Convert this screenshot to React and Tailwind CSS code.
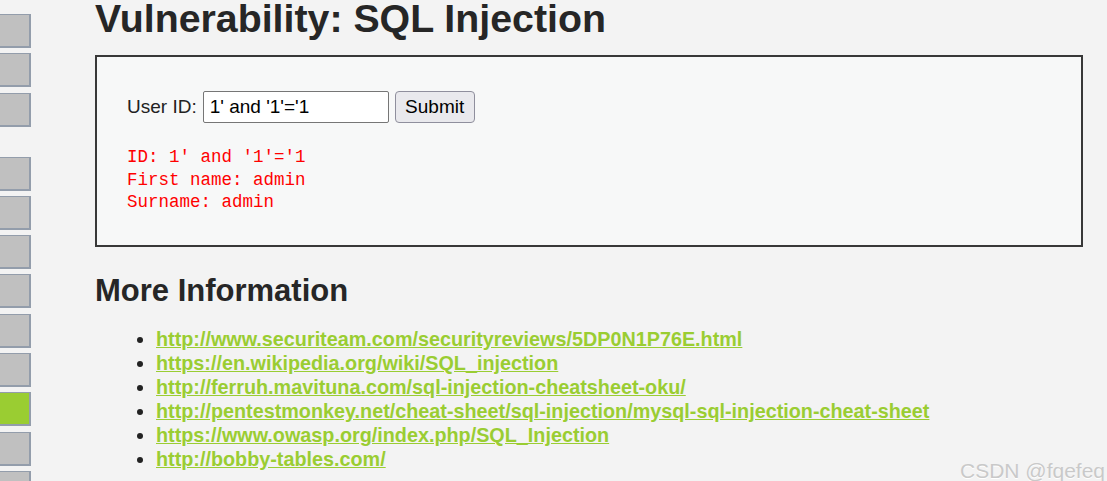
import React from "react";

const links = [
    "http://www.securiteam.com/securityreviews/5DP0N1P76E.html",
    "https://en.wikipedia.org/wiki/SQL_injection",
    "http://ferruh.mavituna.com/sql-injection-cheatsheet-oku/",
    "http://pentestmonkey.net/cheat-sheet/sql-injection/mysql-sql-injection-cheat-sheet",
    "https://www.owasp.org/index.php/SQL_Injection",
    "http://bobby-tables.com/",
];

function MenuBlock({ active }) {
    return (
        <div
            className={`h-[34px] w-[31px] border-t border-r-2 border-b-2 border-[#939dab] ${
                active ? "bg-[#9acd32]" : "bg-[#c0c0c0]"
            }`}
        />
    );
}

function App() {
    const top = [0, 1, 2];
    const bottom = [3, 4, 5, 6, 7, 8, 9, 10, 11];

    return (
        <div className="relative h-[481px] w-[1107px] overflow-hidden bg-[#f3f3f3] font-['Liberation_Sans',Arial,sans-serif] text-[#222]">
            <div className="flex">
                {/* left menu */}
                <div className="flex w-[31px] shrink-0 flex-col pt-[14px]">
                    <div className="flex flex-col gap-[5.3px]">
                        {top.map((i) => (
                            <MenuBlock key={i} />
                        ))}
                    </div>
                    <div className="mt-[30px] flex flex-col gap-[5.3px]">
                        {bottom.map((i) => (
                            <MenuBlock key={i} active={i === 9} />
                        ))}
                    </div>
                </div>

                {/* body */}
                <div className="ml-[64px] w-[988px]">
                    <h1 className="text-[39.3px] font-bold leading-[36px] text-[#262626]">Vulnerability: SQL Injection</h1>

                    <div className="mt-[19px] box-border h-[192px] border-2 border-[#383838] bg-[#f7f8f8] pl-[30px] pt-[34px]">
                        <form className="flex items-center text-[19px]" onSubmit={(e) => e.preventDefault()}>
                            <label className="mr-[6px] text-[#222]">User ID:</label>
                            <input
                                type="text"
                                defaultValue="1' and '1'='1"
                                className="box-border h-[32px] w-[186px] rounded-[2px] border border-[#767676] bg-white px-[6px] text-[19px] text-black outline-none"
                            />
                            <button
                                type="submit"
                                className="ml-[6px] box-border h-[32px] w-[80px] rounded-[4px] border border-[#8f8f9d] bg-[#e9e9ed] text-[19px] text-black"
                            >
                                Submit
                            </button>
                        </form>
                        <pre className="mt-[23px] font-['Liberation_Mono',monospace] text-[17.5px] leading-[22.5px] text-[#ff0000]">
                            {"ID: 1' and '1'='1\nFirst name: admin\nSurname: admin"}
                        </pre>
                    </div>

                    <h2 className="mt-[28px] text-[31px] font-bold leading-[32px] text-[#262626]">More Information</h2>
                    <ul className="mt-[20px] list-disc pl-[61px] text-[19.8px] leading-[24px] font-bold">
                        {links.map((url) => (
                            <li key={url}>
                                <a href={url} className="text-[#9acd32] underline">
                                    {url}
                                </a>
                            </li>
                        ))}
                    </ul>
                </div>
            </div>

            {/* watermark */}
            <div className="absolute left-[960px] top-[460px] text-[21px] leading-[21px] text-[#c9c9c9] [text-shadow:0_1px_0_#ffffff]">
                CSDN @fqefeq
            </div>
        </div>
    );
}

export default App;
